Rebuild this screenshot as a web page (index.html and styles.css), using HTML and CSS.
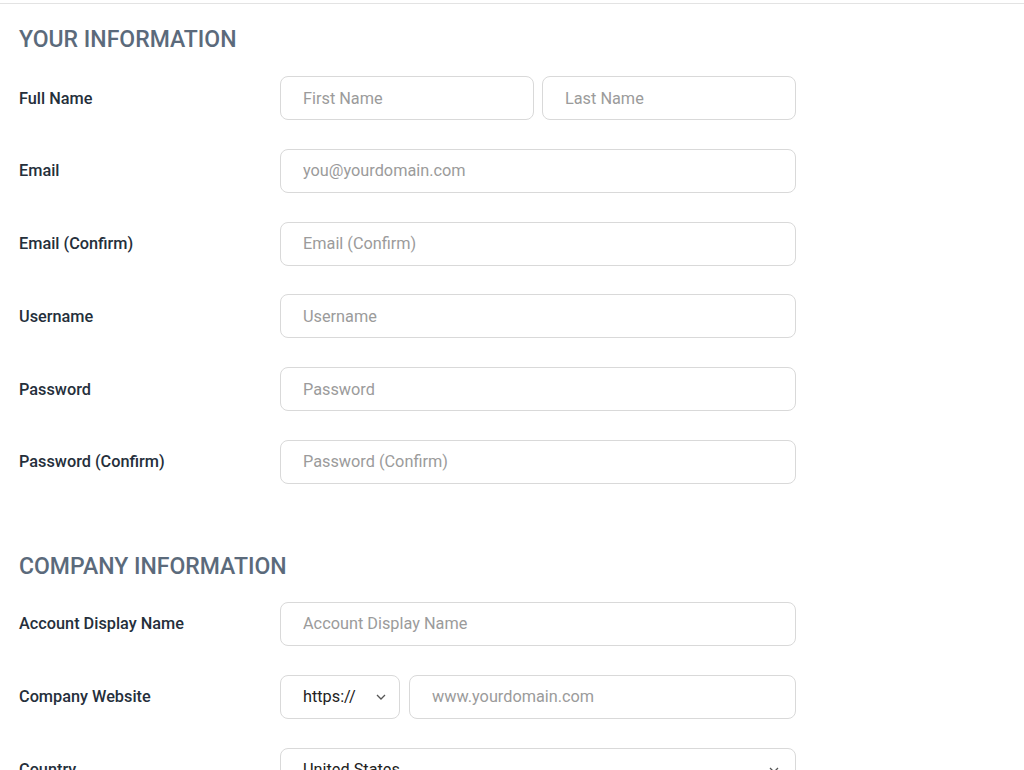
FILE: index.html
```html
<!DOCTYPE html>
<html>
<head>
<meta charset="utf-8">
<link rel="stylesheet" href="styles.css">
</head>
<body>
<div class="rule"></div>
<main class="form">
  <section class="section">
    <h2 class="heading">YOUR INFORMATION</h2>
    <div class="rows">
      <div class="row">
        <label class="label">Full Name</label>
        <div class="fields">
          <input class="input" placeholder="First Name">
          <input class="input" placeholder="Last Name">
        </div>
      </div>
      <div class="row">
        <label class="label">Email</label>
        <div class="fields"><input class="input" placeholder="you@yourdomain.com"></div>
      </div>
      <div class="row">
        <label class="label">Email (Confirm)</label>
        <div class="fields"><input class="input" placeholder="Email (Confirm)"></div>
      </div>
      <div class="row">
        <label class="label">Username</label>
        <div class="fields"><input class="input" placeholder="Username"></div>
      </div>
      <div class="row">
        <label class="label">Password</label>
        <div class="fields"><input class="input" placeholder="Password"></div>
      </div>
      <div class="row">
        <label class="label">Password (Confirm)</label>
        <div class="fields"><input class="input" placeholder="Password (Confirm)"></div>
      </div>
    </div>
  </section>
  <section class="section section-company">
    <h2 class="heading">COMPANY INFORMATION</h2>
    <div class="rows">
      <div class="row">
        <label class="label">Account Display Name</label>
        <div class="fields"><input class="input" placeholder="Account Display Name"></div>
      </div>
      <div class="row">
        <label class="label">Company Website</label>
        <div class="fields">
          <div class="select select-proto">
            <span>https://</span>
            <svg class="chev" width="10" height="6" viewBox="0 0 10 6"><path d="M1 1l4 4 4-4" fill="none" stroke="#555" stroke-width="1.3"/></svg>
          </div>
          <input class="input" placeholder="www.yourdomain.com">
        </div>
      </div>
      <div class="row">
        <label class="label">Country</label>
        <div class="fields">
          <div class="select select-full">
            <span>United States</span>
            <svg class="chev" width="10" height="6" viewBox="0 0 10 6"><path d="M1 1l4 4 4-4" fill="none" stroke="#555" stroke-width="1.3"/></svg>
          </div>
        </div>
      </div>
    </div>
  </section>
</main>
</body>
</html>
```

FILE: styles.css
```css
html, body {
  margin: 0;
  padding: 0;
  background: #fff;
  font-family: Roboto, "Liberation Sans", Arial, sans-serif;
  overflow: hidden;
}
.rule {
  margin-top: 3px;
  height: 1px;
  background: #e3e3e3;
}
.form {
  padding: 0 0 0 19px;
}
.section {
  padding-top: 23px;
}
.section-company {
  padding-top: 70px;
}
.heading {
  margin: 0 0 23px 0;
  font-size: 23px;
  line-height: 26px;
  font-weight: 500;
  color: #5b6a7b;
  letter-spacing: 0;
}
.section-company .heading {
  margin-bottom: 22px;
}
.rows {
  display: flex;
  flex-direction: column;
  gap: 28.8px;
}
.row {
  display: flex;
  align-items: center;
  height: 44px;
}
.label {
  width: 261px;
  flex: none;
  font-size: 16.3px;
  font-weight: 500;
  color: #252f3b;
}
.fields {
  display: flex;
  gap: 8px;
  width: 516px;
}
.input {
  flex: 1;
  min-width: 0;
  box-sizing: border-box;
  height: 44px;
  border: 1px solid #d9d9d9;
  border-radius: 8px;
  padding: 0 0 0 22px;
  font-family: Roboto, "Liberation Sans", Arial, sans-serif;
  font-size: 16.3px;
  color: #222;
  background: #fff;
  outline: none;
}
.input::placeholder {
  color: #9b9b9b;
}
.select {
  box-sizing: border-box;
  height: 44px;
  border: 1px solid #d9d9d9;
  border-radius: 8px;
  display: flex;
  align-items: center;
  justify-content: space-between;
  padding: 0 13px 0 22px;
  font-size: 16.3px;
  color: #222;
  background: #fff;
}
.select-proto {
  width: 120px;
  flex: none;
  margin-right: 1px;
}
.select-full {
  width: 100%;
  padding-right: 16px;
}
.chev {
  display: block;
  margin-top: 1px;
}
```
